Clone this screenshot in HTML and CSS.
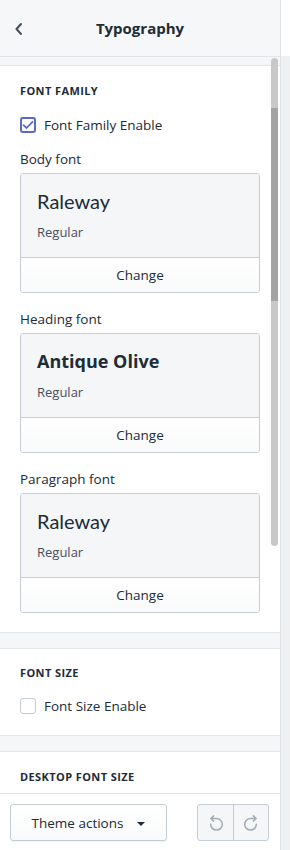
FILE: index.html
```html
<!DOCTYPE html>
<html lang="en">
<head>
  <meta charset="UTF-8">
  <meta name="viewport" content="width=device-width, initial-scale=1.0">
  <title>Typography</title>
  <link rel="stylesheet" href="styles.css">
</head>
<body>
  <div class="sidebar">
    <header class="top">
      <span class="back">
        <svg width="10" height="14" viewBox="0 0 10 14"><path d="M7 2 L2.5 7 L7 12" fill="none" stroke="#454f5b" stroke-width="2" stroke-linecap="round" stroke-linejoin="round"/></svg>
      </span>
      <h1>Typography</h1>
    </header>

    <div class="scroll">
      <section class="panel first">
        <h2>Font family</h2>
        <label class="check">
          <span class="box on">
            <svg width="12" height="10" viewBox="0 0 12 10"><path d="M1.5 5.2 L4.6 8 L10.5 1.8" fill="none" stroke="#5c6ac4" stroke-width="1.8" stroke-linecap="round" stroke-linejoin="round"/></svg>
          </span>
          Font Family Enable
        </label>

        <div class="field">
          <div class="label">Body font</div>
          <div class="font-card">
            <div class="preview">
              <div class="name light">Raleway</div>
              <div class="style">Regular</div>
            </div>
            <button class="change">Change</button>
          </div>
        </div>

        <div class="field">
          <div class="label">Heading font</div>
          <div class="font-card">
            <div class="preview">
              <div class="name bold">Antique Olive</div>
              <div class="style">Regular</div>
            </div>
            <button class="change">Change</button>
          </div>
        </div>

        <div class="field">
          <div class="label">Paragraph font</div>
          <div class="font-card">
            <div class="preview">
              <div class="name light">Raleway</div>
              <div class="style">Regular</div>
            </div>
            <button class="change">Change</button>
          </div>
        </div>
      </section>

      <section class="panel second">
        <h2>Font size</h2>
        <label class="check">
          <span class="box"></span>
          Font Size Enable
        </label>
      </section>

      <section class="panel third">
        <h2>Desktop font size</h2>
      </section>

      <div class="scrollbar"><div class="thumb"></div></div>
    </div>

    <footer class="bottom">
      <button class="actions">Theme actions <span class="caret"></span></button>
      <div class="history">
        <button class="hbtn">
          <svg width="22" height="22" viewBox="0 0 22 22"><path d="M6 6.5 H11.5 A5.8 5.8 0 1 1 5.7 12.3" fill="none" stroke="#a3acb6" stroke-width="1.5" stroke-linecap="round"/><path d="M8.6 3.9 L6 6.5 L8.6 9.1" fill="none" stroke="#a3acb6" stroke-width="1.5" stroke-linecap="round" stroke-linejoin="round"/></svg>
        </button>
        <button class="hbtn">
          <svg width="22" height="22" viewBox="0 0 22 22"><path d="M16 6.5 H10.5 A5.8 5.8 0 1 0 16.3 12.3" fill="none" stroke="#a3acb6" stroke-width="1.5" stroke-linecap="round"/><path d="M13.4 3.9 L16 6.5 L13.4 9.1" fill="none" stroke="#a3acb6" stroke-width="1.5" stroke-linecap="round" stroke-linejoin="round"/></svg>
        </button>
      </div>
    </footer>
  </div>
  <div class="edge"></div>
</body>
</html>
```

FILE: styles.css
```css
* {
  margin: 0;
  padding: 0;
  box-sizing: border-box;
}
body {
  display: flex;
  width: 290px;
  height: 850px;
  overflow: hidden;
  font-family: "Open Sans", "Noto Sans", sans-serif;
  color: #212b36;
  background: #fff;
}
.sidebar {
  width: 280px;
  height: 850px;
  display: flex;
  flex-direction: column;
  background: #f4f6f8;
}
.edge {
  flex: 1;
  border-left: 1px solid #dfe3e8;
  background: linear-gradient(#fff 0, #fff 56px, #eef0f2 56px);
}

/* header */
.top {
  height: 57px;
  flex: 0 0 57px;
  display: flex;
  align-items: center;
  justify-content: center;
  position: relative;
  background: #f6f7f9;
  border-bottom: 1px solid #e1e4e8;
}
.top h1 {
  font-size: 15px;
  font-weight: 700;
  line-height: 20px;
}
.back {
  position: absolute;
  left: 14px;
  top: 22px;
  display: flex;
}

/* scroll area */
.scroll {
  flex: 1;
  overflow: hidden;
  position: relative;
  padding-top: 8px;
}
.panel {
  background: #fff;
  border-top: 1px solid #e3e6e9;
  border-bottom: 1px solid #e3e6e9;
  padding: 17px 20px 19px;
}
.panel.second, .panel.third {
  margin-top: 15px;
  padding-top: 16px;
}
.panel.third {
  padding-top: 17px;
}
.panel h2 {
  font-size: 11px;
  line-height: 16px;
  font-weight: 700;
  text-transform: uppercase;
  letter-spacing: 0.4px;
}
.check {
  display: flex;
  align-items: center;
  gap: 8px;
  height: 20px;
  margin-top: 16px;
  font-size: 13.5px;
}
.second .check {
  margin-top: 15px;
}
.box {
  width: 16px;
  height: 16px;
  border: 1px solid #c4cdd5;
  border-radius: 3px;
  background: #fff;
  display: flex;
  align-items: center;
  justify-content: center;
}
.box.on {
  border: 2px solid #5c6ac4;
}
.field {
  margin-top: 14px;
}
.field + .field {
  margin-top: 16px;
}
.label {
  font-size: 13.5px;
  line-height: 20px;
  margin-bottom: 4px;
}
.font-card {
  border: 1px solid #c4cdd5;
  border-radius: 3px;
  overflow: hidden;
}
.preview {
  background: #f4f6f8;
  padding: 13px 16px 15px;
  border-bottom: 1px solid #c4cdd5;
}
.name {
  font-size: 19px;
  line-height: 28px;
}
.name.light {
  font-family: Lato, sans-serif;
  font-weight: 400;
  font-size: 20px;
}
.name.bold {
  font-weight: 700;
  font-size: 18px;
}
.style {
  margin-top: 7px;
  font-size: 13px;
  line-height: 20px;
  color: #454f5b;
}
.change {
  display: block;
  width: 100%;
  height: 34px;
  border: none;
  background: linear-gradient(#fff, #f9fafb);
  font-family: inherit;
  font-size: 13.5px;
  color: #212b36;
}

/* overlay scrollbar */
.scrollbar {
  position: absolute;
  left: 271px;
  top: 1px;
  width: 7px;
  height: 488px;
  border-radius: 4px;
  background: #c8c8c8;
}
.thumb {
  margin-top: 50px;
  height: 193px;
  background: #a3a3a3;
}

/* footer */
.bottom {
  flex: 0 0 57px;
  background: #fff;
  border-top: 1px solid #dfe3e8;
  display: flex;
  align-items: flex-start;
  justify-content: space-between;
  padding: 10px 11px 0 10px;
}
.actions {
  width: 157px;
  height: 37px;
  border: 1px solid #c4cdd5;
  border-radius: 3px;
  background: linear-gradient(#fff, #f9fafb);
  box-shadow: 0 1px 0 rgba(22, 29, 37, 0.05);
  font-family: inherit;
  font-size: 13.5px;
  color: #212b36;
  display: flex;
  align-items: center;
  justify-content: center;
  gap: 14px;
}
.caret {
  width: 0;
  height: 0;
  border-left: 4px solid transparent;
  border-right: 4px solid transparent;
  border-top: 4px solid #212b36;
  margin-top: 2px;
}
.history {
  display: flex;
  height: 37px;
  border: 1px solid #c4cdd5;
  border-radius: 3px;
  background: #f4f6f8;
  overflow: hidden;
}
.hbtn {
  width: 35px;
  border: none;
  background: transparent;
  display: flex;
  align-items: center;
  justify-content: center;
}
.hbtn + .hbtn {
  border-left: 1px solid #c4cdd5;
}
```
